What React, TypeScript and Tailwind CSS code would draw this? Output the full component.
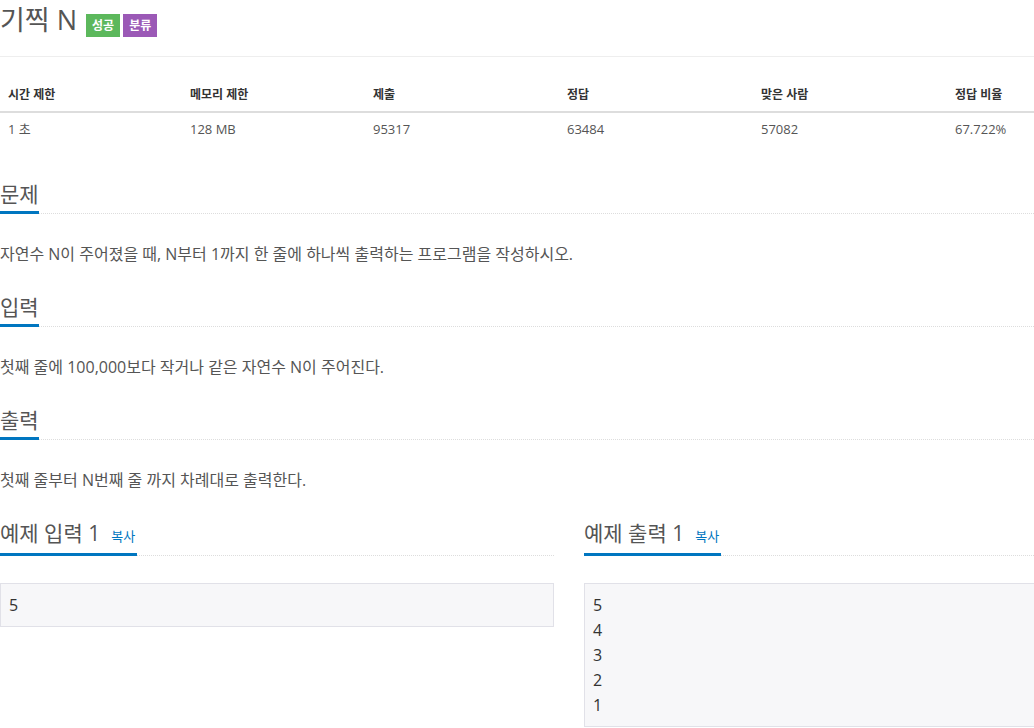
const font = "font-['Open_Sans','Noto_Sans_CJK_KR',sans-serif]";

const stats = [
  { head: "시간 제한", value: "1 초" },
  { head: "메모리 제한", value: "128 MB" },
  { head: "제출", value: "95317" },
  { head: "정답", value: "63484" },
  { head: "맞은 사람", value: "57082" },
  { head: "정답 비율", value: "67.722%" },
];

function Heading({ title, copy }: { title: string; copy?: boolean }) {
  return (
    <div className="flex border-b border-dotted border-[#dddddd]">
      <h2 className="-mb-px flex items-baseline border-b-[3px] border-[#0076c0] pb-[2px] text-[21px] leading-[30px] font-normal text-[#555555]">
        {title}
        {copy && (
          <span className="ml-[11px] pr-[2px] text-[13px] text-[#0076c0]">복사</span>
        )}
      </h2>
    </div>
  );
}

function Section({ title, text }: { title: string; text: string }) {
  return (
    <section className="mb-[26px]">
      <Heading title={title} />
      <p className="mt-[28px] text-[16px] leading-[24px] text-[#555555]">
        {text}
      </p>
    </section>
  );
}

function Sample({ title, lines }: { title: string; lines: string[] }) {
  return (
    <div className="w-[554px]">
      <Heading title={title} copy />
      <pre
        className={`${font} mt-[27px] border border-[#e1e1e8] bg-[#f7f7f9] px-[8px] pt-[9px] pb-[8px] text-[16px] leading-[25px] text-[#333333]`}
      >
        {lines.join("\n")}
      </pre>
    </div>
  );
}

export default function App() {
  return (
    <div className={`${font} w-[1034px] h-[728px] overflow-hidden bg-white`}>
      <div className="w-[1138px]">
        <div className="flex items-end gap-[9px] border-b border-[#eeeeee] pb-[16px]">
          <h1 className="text-[27px] leading-[40px] font-normal text-[#555555]">
            기찍 N
          </h1>
          <div className="mb-[3px] flex gap-[3px]">
            <span className="flex h-[23px] items-center bg-[#5cb85c] px-[6px] text-[12px] font-bold text-white">
              성공
            </span>
            <span className="flex h-[23px] items-center bg-[#9b59b6] px-[6px] text-[12px] font-bold text-white">
              분류
            </span>
          </div>
        </div>

        <div className="mt-[22px] mb-[32px]">
          <div className="grid h-[34px] grid-cols-[182px_183px_194px_194px_194px_191px] items-center border-b-2 border-[#dddddd]">
            {stats.map((s) => (
              <div key={s.head} className="pl-[8px] text-[12px] font-bold text-[#333333]">
                {s.head}
              </div>
            ))}
          </div>
          <div className="grid h-[34px] grid-cols-[182px_183px_194px_194px_194px_191px] items-center">
            {stats.map((s) => (
              <div key={s.head} className="pl-[8px] text-[13px] text-[#555555]">
                {s.value}
              </div>
            ))}
          </div>
        </div>

        <Section
          title="문제"
          text="자연수 N이 주어졌을 때, N부터 1까지 한 줄에 하나씩 출력하는 프로그램을 작성하시오."
        />
        <Section
          title="입력"
          text="첫째 줄에 100,000보다 작거나 같은 자연수 N이 주어진다."
        />
        <Section
          title="출력"
          text="첫째 줄부터 N번째 줄 까지 차례대로 출력한다."
        />

        <div className="flex gap-[30px]">
          <Sample title="예제 입력 1" lines={["5"]} />
          <Sample title="예제 출력 1" lines={["5", "4", "3", "2", "1"]} />
        </div>
      </div>
    </div>
  );
}
